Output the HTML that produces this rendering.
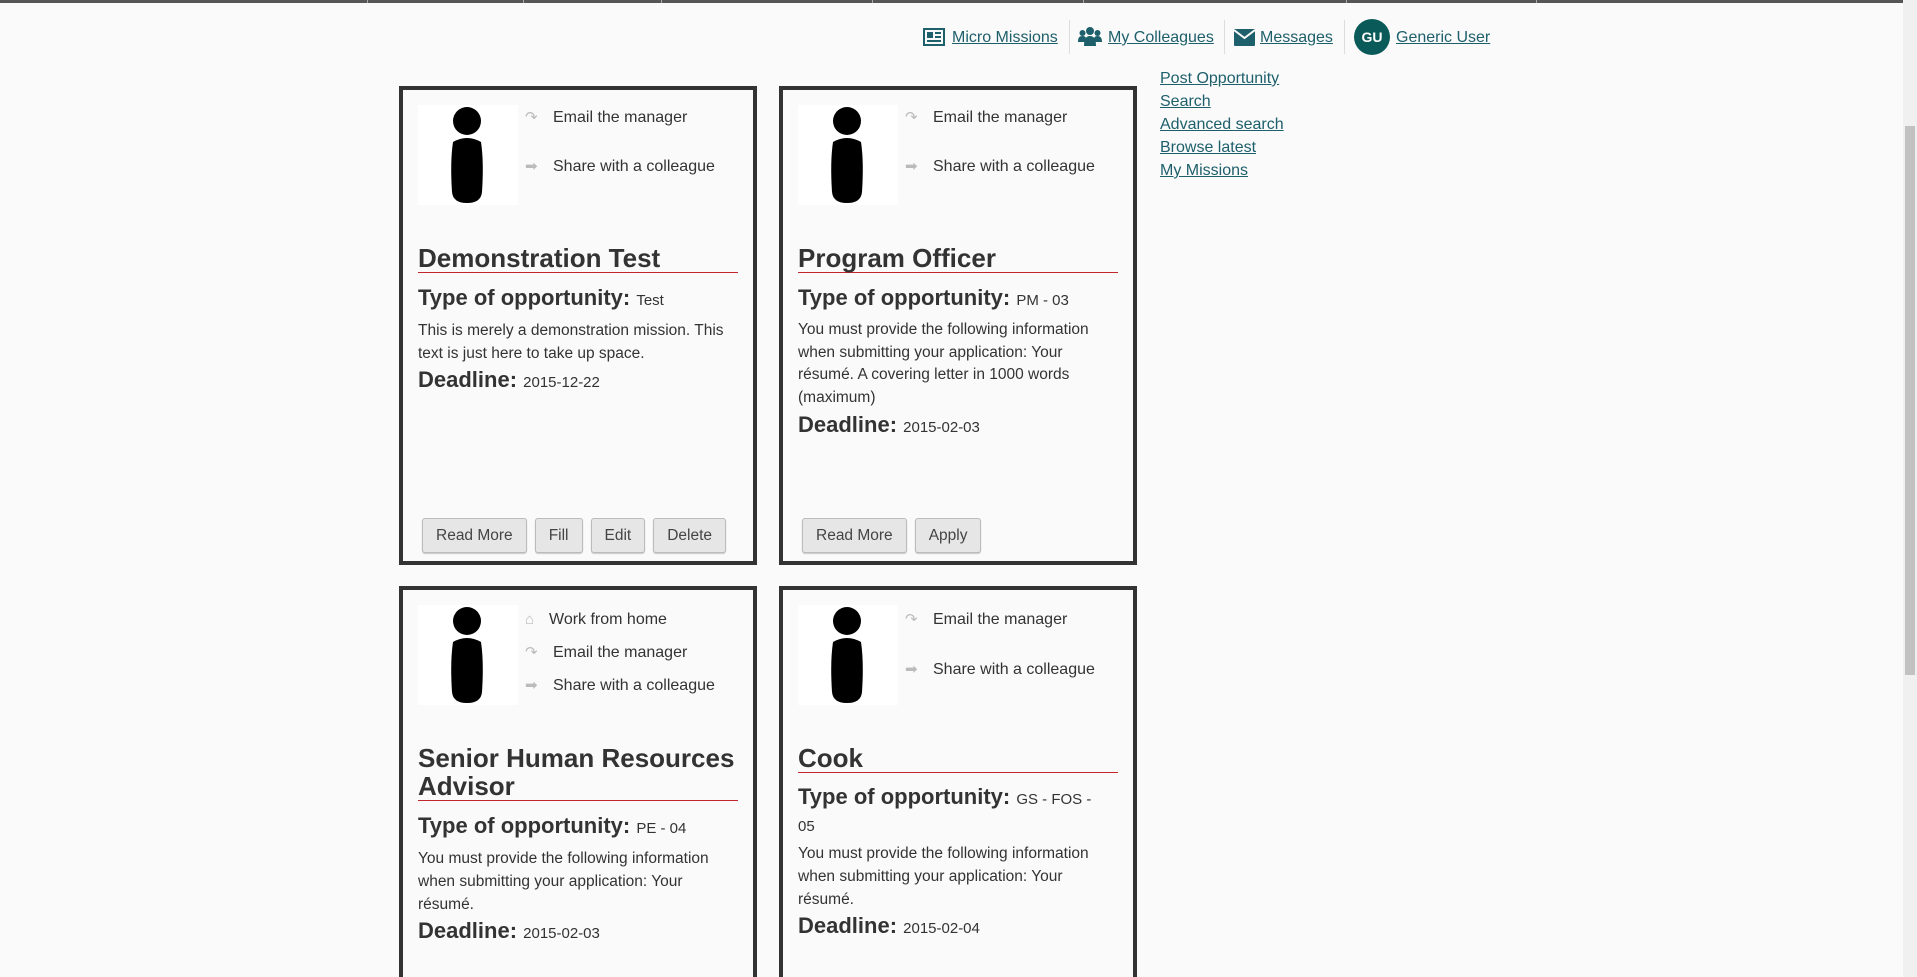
<!DOCTYPE html>
<html><head><meta charset="utf-8"><style>
*{box-sizing:border-box;margin:0;padding:0}
html,body{width:1917px;height:977px;overflow:hidden;background:#fafafa;font-family:"Liberation Sans",sans-serif;color:#333}
#wrap{position:fixed;left:0;top:0;width:1917px;height:977px;overflow:hidden}
.abs{position:absolute}
a{color:#1d5f6b;text-decoration:underline}
.topbar{position:absolute;left:0;top:0;width:1903px;height:3px;background:#555}
.topbar i{position:absolute;top:0;width:1px;height:3px;background:#aaa}
.nav{font-size:16px;top:28px;line-height:20px}
.vsep{position:absolute;top:20px;width:1px;height:34px;background:#ddd}
.card{position:absolute;width:358px;border:4px solid #333;background:#fafafa}
.img{position:absolute;left:15px;top:15px;width:100px;height:100px;background:#fff}
.act{position:absolute;font-size:16px;line-height:20px;white-space:nowrap}
.act span.ic{position:absolute;left:-28px;top:0;color:#bbb;font-size:15px}
.body{position:absolute;left:15px;right:15px;top:154px}
h2{font-size:26px;line-height:28px;font-weight:bold;border-bottom:1px solid #c1272d;color:#333}
.type{margin-top:12px;font-size:22px;line-height:26px;font-weight:bold}
.type span,.dl span{font-size:15px;font-weight:normal}
.desc{margin-top:5px;font-size:15.5px;line-height:23px}
.dl{margin-top:2px;font-size:22px;line-height:26px;font-weight:bold}
.btns{position:absolute;left:19px;bottom:8px;display:flex;gap:8px}
.btn{height:35px;padding:0 13px;border:1px solid #bbb;border-radius:3px;background:#e6e6e6;font-size:15.5px;line-height:33px;color:#444;box-shadow:0 1px 1px rgba(0,0,0,.2)}
.side a{position:absolute;left:1160px;font-size:16px;line-height:20px}
</style></head><body><div id="wrap">
<div class="topbar"><i style="left:367px"></i><i style="left:523px"></i><i style="left:661px"></i><i style="left:872px"></i><i style="left:1083px"></i><i style="left:1346px"></i><i style="left:1536px"></i></div>

<svg class="abs" style="left:923px;top:28px" width="22" height="18" viewBox="0 0 22 18"><rect x="1" y="1" width="20" height="16" fill="none" stroke="#1d5f6b" stroke-width="2"/><rect x="4" y="4" width="6" height="6" fill="#1d5f6b"/><path d="M12 5h6M12 9h6M4 13h14" stroke="#1d5f6b" stroke-width="2"/></svg>
<a class="abs nav" style="left:952px">Micro Missions</a>
<div class="vsep" style="left:1069px"></div>
<svg class="abs" style="left:1078px;top:26px" width="24" height="22" viewBox="0 0 24 22"><circle cx="12" cy="5" r="4" fill="#1d5f6b"/><circle cx="4.5" cy="7" r="3" fill="#1d5f6b"/><circle cx="19.5" cy="7" r="3" fill="#1d5f6b"/><path d="M6 20c0-7 2-10 6-10s6 3 6 10z M0 16c0-4 1-6 4.5-6s4 2 4 6z M15.5 16c0-4 1-6 4-6s4.5 2 4.5 6z" fill="#1d5f6b"/></svg>
<a class="abs nav" style="left:1108px">My Colleagues</a>
<div class="vsep" style="left:1224px"></div>
<svg class="abs" style="left:1234px;top:29px" width="21" height="17" viewBox="0 0 21 17"><rect x="0" y="0" width="21" height="17" rx="1" fill="#1d5f6b"/><path d="M0 1l10.5 8L21 1" stroke="#fafafa" stroke-width="2" fill="none"/></svg>
<a class="abs nav" style="left:1260px">Messages</a>
<div class="vsep" style="left:1344px"></div>
<div class="abs" style="left:1354px;top:19px;width:36px;height:36px;border-radius:50%;background:#0b5a5a;color:#fff;font-weight:bold;font-size:14px;line-height:36px;text-align:center">GU</div>
<a class="abs nav" style="left:1396px">Generic User</a>

<div class="side"><a style="top:69px">Post Opportunity</a><a style="top:92px">Search</a><a style="top:115px">Advanced search</a><a style="top:138px">Browse latest</a><a style="top:161px">My Missions</a></div>

<div class="card" style="left:399px;top:86px;height:479px">
 <div class="img"><svg width="100" height="100" viewBox="0 0 100 100"><circle cx="49" cy="16" r="14" fill="#000"/><path d="M35 37q14 -8 28 0q3 20 1 50q-1 11 -15 11q-14 0 -15 -11q-2 -30 1 -50z" fill="#000"/></svg></div>
 <div class="act" style="left:150px;top:18px"><span class="ic">↷</span>Email the manager</div>
 <div class="act" style="left:150px;top:67px"><span class="ic">➡</span>Share with a colleague</div>
 <div class="body"><h2>Demonstration Test</h2><div class="type">Type of opportunity: <span>Test</span></div><div class="desc">This is merely a demonstration mission. This text is just here to take up space.</div><div class="dl">Deadline: <span>2015-12-22</span></div></div>
 <div class="btns"><div class="btn">Read More</div><div class="btn">Fill</div><div class="btn">Edit</div><div class="btn">Delete</div></div>
</div>

<div class="card" style="left:779px;top:86px;height:479px">
 <div class="img"><svg width="100" height="100" viewBox="0 0 100 100"><circle cx="49" cy="16" r="14" fill="#000"/><path d="M35 37q14 -8 28 0q3 20 1 50q-1 11 -15 11q-14 0 -15 -11q-2 -30 1 -50z" fill="#000"/></svg></div>
 <div class="act" style="left:150px;top:18px"><span class="ic">↷</span>Email the manager</div>
 <div class="act" style="left:150px;top:67px"><span class="ic">➡</span>Share with a colleague</div>
 <div class="body"><h2>Program Officer</h2><div class="type">Type of opportunity: <span>PM - 03</span></div><div class="desc" style="line-height:22.7px">You must provide the following information when submitting your application: Your résumé. A covering letter in 1000 words (maximum)</div><div class="dl">Deadline: <span>2015-02-03</span></div></div>
 <div class="btns"><div class="btn">Read More</div><div class="btn">Apply</div></div>
</div>

<div class="card" style="left:399px;top:586px;height:391px;border-bottom:none">
 <div class="img"><svg width="100" height="100" viewBox="0 0 100 100"><circle cx="49" cy="16" r="14" fill="#000"/><path d="M35 37q14 -8 28 0q3 20 1 50q-1 11 -15 11q-14 0 -15 -11q-2 -30 1 -50z" fill="#000"/></svg></div>
 <div class="act" style="left:146px;top:20px"><span class="ic" style="left:-24px">⌂</span>Work from home</div>
 <div class="act" style="left:150px;top:53px"><span class="ic">↷</span>Email the manager</div>
 <div class="act" style="left:150px;top:86px"><span class="ic">➡</span>Share with a colleague</div>
 <div class="body"><h2>Senior Human Resources Advisor</h2><div class="type">Type of opportunity: <span>PE - 04</span></div><div class="desc">You must provide the following information when submitting your application: Your résumé.</div><div class="dl">Deadline: <span>2015-02-03</span></div></div>
</div>

<div class="card" style="left:779px;top:586px;height:391px;border-bottom:none">
 <div class="img"><svg width="100" height="100" viewBox="0 0 100 100"><circle cx="49" cy="16" r="14" fill="#000"/><path d="M35 37q14 -8 28 0q3 20 1 50q-1 11 -15 11q-14 0 -15 -11q-2 -30 1 -50z" fill="#000"/></svg></div>
 <div class="act" style="left:150px;top:20px"><span class="ic">↷</span>Email the manager</div>
 <div class="act" style="left:150px;top:70px"><span class="ic">➡</span>Share with a colleague</div>
 <div class="body"><h2>Cook</h2><div class="type" style="line-height:24px">Type of opportunity: <span>GS - FOS -<br>05</span></div><div class="desc" style="margin-top:3px">You must provide the following information when submitting your application: Your résumé.</div><div class="dl">Deadline: <span>2015-02-04</span></div></div>
</div>

<div class="abs" style="left:1903px;top:0;width:14px;height:977px;background:#f0f0f0"></div>
<div class="abs" style="left:1905px;top:126px;width:10px;height:549px;background:#c1c1c1"></div>
</div></body></html>
